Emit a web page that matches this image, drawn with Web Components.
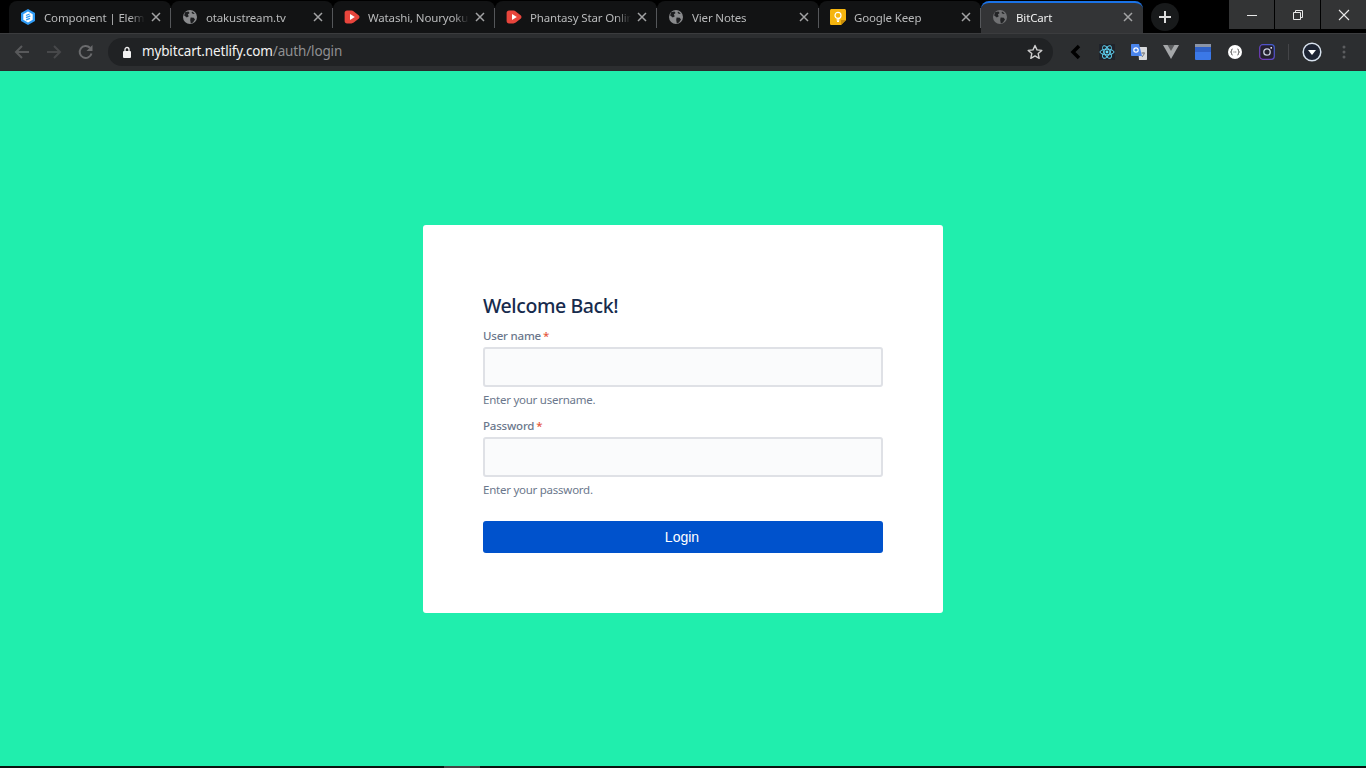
<!DOCTYPE html>
<html lang="en">
<head>
<meta charset="utf-8">
<title>BitCart</title>
<style>
	html, body { height: 100%; }
	body {
		margin: 0;
		display: flex;
		flex-direction: column;
		height: 768px;
		overflow: hidden;
		background: #20eead;
		font-family: "Noto Sans", "Open Sans", sans-serif;
	}
</style>
</head>
<body>
<tab-strip>
	<browser-tab label="Component | Element" icon="element"></browser-tab>
	<browser-tab label="otakustream.tv" icon="globe"></browser-tab>
	<browser-tab label="Watashi, Nouryoku wa Heikinchi" icon="play"></browser-tab>
	<browser-tab label="Phantasy Star Online 2" icon="play"></browser-tab>
	<browser-tab label="Vier Notes" icon="globe"></browser-tab>
	<browser-tab label="Google Keep" icon="keep"></browser-tab>
	<browser-tab label="BitCart" icon="globe" active></browser-tab>
</tab-strip>
<tool-bar host-name="mybitcart.netlify.com" path="/auth/login"></tool-bar>
<login-page>
	<login-card>
		<form-field label="User name" hint="Enter your username."></form-field>
		<form-field label="Password" hint="Enter your password."></form-field>
	</login-card>
</login-page>
<task-strip></task-strip>

<script>
const ICONS = {
	element: `<svg viewBox="0 0 16 16" width="16" height="16"><path d="M8 0 15 4v8l-7 4-7-4V4z" fill="#2f9bf5"/><path d="M8 2.600 12.700 5.300v5.400L8 13.400 3.300 10.700V5.300z" fill="#fff"/><path d="M6 6.500 9.600 5M6 8.700l4.400-1.800M6.200 10.800 10 9.300" stroke="#2f9bf5" stroke-width="1.300"/></svg>`,
	globe: `<svg viewBox="0 0 16 16" width="16" height="16"><circle cx="8" cy="8" r="7" fill="#8a8b8d"/><path d="M3 3.200 6.400 2.400 7.600 4 5.800 5.600 6.800 7.200 4.800 8.600 2.200 6.600zM8.600 8.400l3.200.4 1.200 1.600-2 3.200-2.200.8-.6-3.400zM10 2.400l2.800 2-1.600.6-1.600-1z" fill="#1d1e20"/></svg>`,
	play: `<svg viewBox="0 0 16 16" width="16" height="16"><path d="M3 1.600h4.400c1 0 1.600.3 2.400.8l4.800 3.800c1.200 1 1.200 2.600 0 3.600l-4.800 3.800c-.8.500-1.400.8-2.400.8H3c-1.400 0-2.400-1-2.400-2.400V4C.6 2.600 1.600 1.600 3 1.600z" fill="#e8453c"/><path d="M6 5v6l4.800-3z" fill="#fff"/></svg>`,
	keep: `<svg viewBox="0 0 16 16" width="16" height="16"><path d="M1.600 0h12.800c.9 0 1.600.7 1.600 1.600V11l-5 5H1.600C.7 16 0 15.300 0 14.400V1.600C0 .7.700 0 1.600 0z" fill="#f5b50f"/><path d="M11 16v-5h5z" fill="#c98d08"/><circle cx="8" cy="6.400" r="3" fill="none" stroke="#fff" stroke-width="1.200"/><path d="M6.600 10.800h2.800M7 12.400h2" stroke="#fff" stroke-width="1.200"/></svg>`
};

class TabStrip extends HTMLElement {
	constructor() {
		super();
		const root = this.attachShadow({ mode: "open" });
		root.innerHTML = `
			<style>
				:host {
					display: flex;
					flex: none;
					height: 33px;
					background: #000;
					box-sizing: border-box;
				}
				.tabs {
					display: flex;
					padding-left: 9px;
					margin-top: 1px;
				}
				.new {
					flex: none;
					width: 28px;
					height: 28px;
					margin: 3px 0 0 8px;
					border-radius: 50%;
					background: #181a1b;
					display: flex;
					align-items: center;
					justify-content: center;
				}
				.controls {
					display: flex;
					gap: 1px;
					margin-left: auto;
					height: 29px;
				}
				.controls span {
					width: 45px;
					background: #333435;
					display: flex;
					align-items: center;
					justify-content: center;
				}
			</style>
			<div class="tabs"><slot></slot></div>
			<span class="new"><svg width="14" height="14" viewBox="0 0 14 14"><path d="M7 1v12M1 7h12" stroke="#dcdcdc" stroke-width="2"/></svg></span>
			<div class="controls">
				<span><svg width="12" height="12" viewBox="0 0 12 12"><path d="M1 6.500h10" stroke="#e8e8e8" stroke-width="1"/></svg></span>
				<span><svg width="12" height="12" viewBox="0 0 12 12"><path d="M1.500 3.500h7v7h-7zM3.500 3.500v-2h7v7h-2" fill="none" stroke="#e8e8e8" stroke-width="1"/></svg></span>
				<span><svg width="12" height="12" viewBox="0 0 12 12"><path d="M1 1l10 10M11 1 1 11" stroke="#e8e8e8" stroke-width="1.100"/></svg></span>
			</div>
		`;
	}
}
customElements.define("tab-strip", TabStrip);

class BrowserTab extends HTMLElement {
	constructor() {
		super();
		const active = this.hasAttribute("active");
		const root = this.attachShadow({ mode: "open" });
		root.innerHTML = `
			<style>
				:host {
					display: flex;
					align-items: center;
					box-sizing: border-box;
					width: 162px;
					height: 32px;
					padding: 0 10px 0 11px;
					position: relative;
					background: ${active ? "#333436" : "#121314"};
					border-radius: 8px 8px 0 0;
					color: ${active ? "#f0f0f0" : "#b9babb"};
					font: 11.5px "Noto Sans", "Open Sans", sans-serif;
					letter-spacing: -.15px;
				}
				:host([active]) {
					border-top: 2px solid #1a73e8;
					padding-bottom: 2px;
				}
				:host([active]) .icon { opacity: .7; }
				.icon { flex: none; display: flex; width: 16px; height: 16px; }
				.label {
					flex: 1;
					min-width: 0;
					margin-left: 8px;
					white-space: nowrap;
					overflow: hidden;
					-webkit-mask-image: linear-gradient(to right, #000 85%, transparent);
					mask-image: linear-gradient(to right, #000 85%, transparent);
				}
				.close { flex: none; display: flex; margin-left: 6px; }
				.sep {
					position: absolute;
					right: 0;
					top: 7px;
					width: 1px;
					height: 20px;
					background: #55575a;
				}
			</style>
			<span class="icon">${ICONS[this.getAttribute("icon")]}</span>
			<span class="label">${this.getAttribute("label")}</span>
			<span class="close"><svg width="10" height="10" viewBox="0 0 10 10"><path d="M1 1l8 8M9 1 1 9" stroke="#a2a3a4" stroke-width="1.500"/></svg></span>
			${active ? "" : `<span class="sep"></span>`}
		`;
	}
}
customElements.define("browser-tab", BrowserTab);

class ToolBar extends HTMLElement {
	constructor() {
		super();
		const root = this.attachShadow({ mode: "open" });
		root.innerHTML = `
			<style>
				:host {
					display: flex;
					flex: none;
					align-items: center;
					height: 38px;
					box-sizing: border-box;
					background: #2c2e30;
					border-top: 1px solid #3b3c3e;
					border-bottom: 1px solid #2a2b2d;
					padding-left: 13px;
				}
				.nav { display: flex; gap: 14px; }
				.nav svg { display: block; }
				.omni {
					display: flex;
					align-items: center;
					box-sizing: border-box;
					width: 945px;
					height: 28px;
					margin-left: 13px;
					padding: 0 10px 0 14px;
					background: #202224;
					border-radius: 14px;
					font: 13.5px "Noto Sans", "Open Sans", sans-serif;
					color: #8f9092;
				}
				.omni b { font-weight: 400; color: #f2f2f2; }
				.url { margin-left: 10px; flex: 1; letter-spacing: -.15px; padding-bottom: 2px; }
				.ext {
					display: flex;
					align-items: center;
					margin-left: 16px;
				}
				.ext svg { display: block; flex: none; }
				.divider { width: 1px; height: 16px; background: #444548; margin: 0 13px 0 13px; }
			</style>
			<div class="nav">
				<svg width="18" height="18" viewBox="0 0 18 18"><path d="M16 9H3M9 3 3 9l6 6" fill="none" stroke="#58595b" stroke-width="2"/></svg>
				<svg width="18" height="18" viewBox="0 0 18 18"><path d="M2 9h13M9 3l6 6-6 6" fill="none" stroke="#47484a" stroke-width="2"/></svg>
				<svg width="18" height="18" viewBox="0 0 18 18"><path d="M14.500 10.500A6 6 0 1 1 13 4.800" fill="none" stroke="#6a6b6d" stroke-width="2"/><path d="M15.500 2v6h-6z" fill="#6a6b6d"/></svg>
			</div>
			<div class="omni">
				<svg width="10" height="12" viewBox="0 0 10 12"><rect x="1" y="5" width="8" height="7" rx="1" fill="#f2f2f2"/><path d="M3 5.500V3.500a2 2 0 0 1 4 0v2" fill="none" stroke="#f2f2f2" stroke-width="1.300"/></svg>
				<span class="url"><b>${this.getAttribute("host-name")}</b>${this.getAttribute("path")}</span>
				<svg width="16" height="16" viewBox="0 0 16 16"><path d="m8 1.500 2 4.400 4.800.5-3.600 3.200 1 4.700L8 11.900l-4.200 2.400 1-4.700L1.200 6.400 6 5.900z" fill="none" stroke="#cfcfcf" stroke-width="1.400" stroke-linejoin="round"/></svg>
			</div>
			<div class="ext">
				<svg width="14" height="16" viewBox="0 0 14 16"><path d="M10 2 4 8l6 6" fill="none" stroke="#000" stroke-width="3.500"/></svg>
				<svg style="margin-left:16px" width="16" height="16" viewBox="0 0 16 16"><rect width="16" height="16" fill="#20232a"/><g fill="none" stroke="#61dafb" stroke-width=".9"><ellipse cx="8" cy="8" rx="7" ry="2.800"/><ellipse cx="8" cy="8" rx="7" ry="2.800" transform="rotate(60 8 8)"/><ellipse cx="8" cy="8" rx="7" ry="2.800" transform="rotate(120 8 8)"/></g><circle cx="8" cy="8" r="1.400" fill="#61dafb"/></svg>
				<svg style="margin-left:16px" width="16" height="16" viewBox="0 0 16 16"><path d="M7 3h8c.6 0 1 .4 1 1v11c0 .6-.4 1-1 1H8z" fill="#d8dadc"/><path d="M1 0h7l3 12H1c-.6 0-1-.4-1-1V1c0-.6.4-1 1-1z" fill="#4a85ec"/><circle cx="5" cy="6" r="2.200" fill="none" stroke="#fff" stroke-width="1.200"/><path d="M10.500 9h3.500M12.200 8.500v1M11 13l2.500-3.500" stroke="#6a6c70" stroke-width=".9"/></svg>
				<svg style="margin-left:16px" width="16" height="14" viewBox="0 0 16 14"><path d="M0 0h16L8 14z" fill="#a5a7a9"/><path d="M4.500 0h7L8 6z" fill="#5a5c5e"/></svg>
				<svg style="margin-left:16px" width="16" height="16" viewBox="0 0 16 16"><rect width="16" height="16" rx="1" fill="#3b78e7"/><rect width="16" height="3" fill="#8a94a6"/><rect y="3" width="16" height="5" fill="#2f62c9"/></svg>
				<svg style="margin-left:16px" width="16" height="16" viewBox="0 0 16 16"><circle cx="8" cy="8" r="7" fill="#fff"/><path d="M5.500 5c-1.200 0-.8 1.500-1 2.200-.1.500-.6.800-.9.800.3 0 .8.300.9.800.2.700-.2 2.200 1 2.200M10.500 5c1.200 0 .8 1.500 1 2.200.1.500.6.800.9.800-.3 0-.8.300-.9.800-.2.700.2 2.200-1 2.200" fill="none" stroke="#333" stroke-width=".9"/><path d="M6.600 8h.8M8.400 8h.8" stroke="#333"/></svg>
				<svg style="margin-left:16px" width="16" height="16" viewBox="0 0 16 16"><defs><linearGradient id="ig" x1="0" y1="1" x2="1" y2="0"><stop offset="0" stop-color="#7b35b8"/><stop offset="1" stop-color="#3f5fd0"/></linearGradient></defs><rect x=".7" y=".7" width="14.600" height="14.600" rx="3" fill="#23202f" stroke="url(#ig)" stroke-width="1.200"/><circle cx="8" cy="8" r="3.200" fill="none" stroke="#c9cede" stroke-width="1.300"/><circle cx="12.200" cy="3.800" r=".9" fill="#fff"/></svg>
				<span class="divider"></span>
				<svg width="20" height="20" viewBox="0 0 20 20"><circle cx="10" cy="10" r="8.800" fill="#1d2433" stroke="#d8e2ee" stroke-width="1.500"/><path d="M6 8h8l-4 5z" fill="#fff"/></svg>
				<svg style="margin-left:20px" width="4" height="14" viewBox="0 0 4 14"><circle cx="2" cy="2" r="1.500" fill="#5c5d5f"/><circle cx="2" cy="7" r="1.500" fill="#5c5d5f"/><circle cx="2" cy="12" r="1.500" fill="#5c5d5f"/></svg>
			</div>
		`;
	}
}
customElements.define("tool-bar", ToolBar);

class LoginPage extends HTMLElement {
	constructor() {
		super();
		const root = this.attachShadow({ mode: "open" });
		root.innerHTML = `
			<style>
				:host {
					display: flex;
					flex: 1;
					min-height: 0;
					justify-content: center;
					padding-top: 154px;
					box-sizing: border-box;
					background: #20eead;
				}
			</style>
			<slot></slot>
		`;
	}
}
customElements.define("login-page", LoginPage);

class LoginCard extends HTMLElement {
	constructor() {
		super();
		const root = this.attachShadow({ mode: "open" });
		root.innerHTML = `
			<style>
				:host {
					display: block;
					align-self: flex-start;
					box-sizing: border-box;
					width: 520px;
					height: 388px;
					padding: 66px 60px 60px;
					background: #fff;
					border-radius: 3px;
					font-family: "Noto Sans", "Open Sans", sans-serif;
				}
				h1 {
					margin: 0 0 7px;
					font-size: 19.5px;
					line-height: 30px;
					font-weight: 500;
					color: #172b4d;
					letter-spacing: -.4px;
				}
				button {
					display: block;
					width: 100%;
					height: 32px;
					margin-top: 13px;
					padding: 0 2px 0 0;
					border: 0;
					border-radius: 3px;
					background: #0052cc;
					color: #fff;
					font: 14px "Liberation Sans", Arial, sans-serif;
				}
			</style>
			<h1>Welcome Back!</h1>
			<slot></slot>
			<button type="button">Login</button>
		`;
	}
}
customElements.define("login-card", LoginCard);

class FormField extends HTMLElement {
	constructor() {
		super();
		const root = this.attachShadow({ mode: "open" });
		root.innerHTML = `
			<style>
				:host {
					display: block;
					height: 90px;
					font-family: "Noto Sans", "Open Sans", sans-serif;
				}
				label {
					display: block;
					height: 16px;
					font-size: 11.5px;
					line-height: 16px;
					font-weight: 500;
					color: #6b778c;
					letter-spacing: -.2px;
				}
				label i {
					font-style: normal;
					color: #e5583c;
					margin-left: 2px;
				}
				.box {
					box-sizing: border-box;
					height: 40px;
					margin-top: 3px;
					background: #fafbfc;
					border: 2px solid #dfe1e6;
					border-radius: 3px;
				}
				.hint {
					margin-top: 5px;
					font-size: 11.5px;
					line-height: 16px;
					letter-spacing: -.25px;
					color: #6b778c;
				}
			</style>
			<label>${this.getAttribute("label")}<i>*</i></label>
			<div class="box"></div>
			<div class="hint">${this.getAttribute("hint")}</div>
		`;
	}
}
customElements.define("form-field", FormField);

class TaskStrip extends HTMLElement {
	constructor() {
		super();
		const root = this.attachShadow({ mode: "open" });
		root.innerHTML = `
			<style>
				:host {
					display: block;
					flex: none;
					height: 2px;
					background: #0a120f;
				}
				div { width: 36px; height: 2px; margin-left: 444px; background: #444; }
			</style>
			<div></div>
		`;
	}
}
customElements.define("task-strip", TaskStrip);
</script>
</body>
</html>
